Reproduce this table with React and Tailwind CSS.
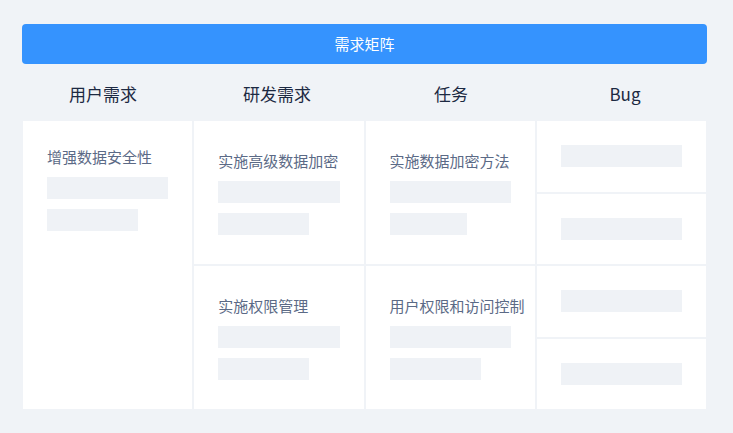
const FONT = { fontFamily: '"Noto Sans CJK SC", "Noto Sans", sans-serif' };

const columns = ["用户需求", "研发需求", "任务", "Bug"];

function Bar({ short }) {
  return <div className={`h-[22px] bg-[#eff2f6] ${short || "w-full"}`} />;
}

function Item({ title, short }) {
  return (
    <div className="min-w-0">
      <div className="text-[15px] leading-5 text-[#5b6a86] whitespace-nowrap">{title}</div>
      <div className="mt-[10px] flex flex-col gap-[10px]">
        <Bar />
        <Bar short={short} />
      </div>
    </div>
  );
}

export default function App() {
  return (
    <div
      className="w-[733px] h-[433px] bg-[#f0f3f7] pl-[22px] pr-[26px] pt-6 overflow-hidden"
      style={FONT}
    >
      {/* matrix title */}
      <div className="h-10 rounded bg-[#3593fe] flex items-center justify-center text-[15px] text-white">
        需求矩阵
      </div>

      {/* column headers */}
      <div className="grid grid-cols-4 h-[57px] items-center pt-[3px] -ml-[6px] -mr-[5px]">
        {columns.map((c) => (
          <div key={c} className="text-center text-[17px] text-[#1c2942]">
            {c}
          </div>
        ))}
      </div>

      {/* matrix body */}
      <div className="grid grid-cols-4 gap-[2px] h-[288px] mx-px">
        <div className="bg-white px-6 pt-[26px]">
          <Item title="增强数据安全性" short="w-[91px]" />
        </div>

        <div className="grid grid-cols-1 grid-rows-2 gap-[2px]">
          <div className="bg-white px-6 flex flex-col justify-center">
            <Item title="实施高级数据加密" short="w-[91px]" />
          </div>
          <div className="bg-white px-6 flex flex-col justify-center">
            <Item title="实施权限管理" short="w-[91px]" />
          </div>
        </div>

        <div className="grid grid-cols-1 grid-rows-2 gap-[2px]">
          <div className="bg-white px-6 flex flex-col justify-center">
            <Item title="实施数据加密方法" short="w-[77px]" />
          </div>
          <div className="bg-white px-6 flex flex-col justify-center">
            <Item title="用户权限和访问控制" short="w-[91px]" />
          </div>
        </div>

        <div className="grid grid-cols-1 grid-rows-4 gap-[2px]">
          {[0, 1, 2, 3].map((i) => (
            <div key={i} className="bg-white px-6 flex items-center">
              <Bar />
            </div>
          ))}
        </div>
      </div>
    </div>
  );
}
